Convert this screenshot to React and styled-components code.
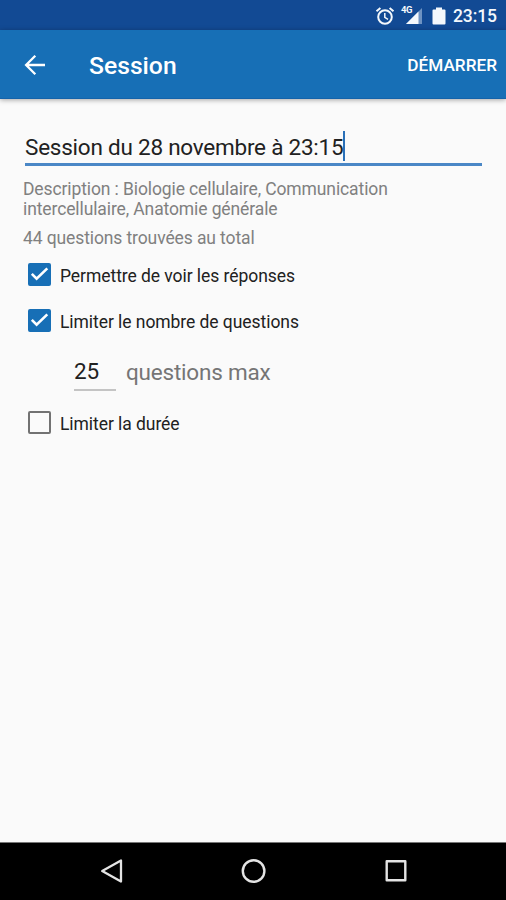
import styled, { createGlobalStyle } from "styled-components";

const GlobalStyle = createGlobalStyle`
  * {
    box-sizing: border-box;
  }
  body {
    margin: 0;
    background-color: #fafafa;
    font-family: Roboto, sans-serif;
    color: #212121;
  }
`;

const SScreen = styled.div`
  display: flex;
  flex-direction: column;
  width: 506px;
  height: 900px;
  overflow: hidden;
  white-space: nowrap;
`;

const SStatusBar = styled.div`
  display: flex;
  align-items: center;
  justify-content: flex-end;
  height: 30px;
  padding: 1px 9px 0 0;
  background-color: #124a94;
  color: #f4f8fc;
  svg {
    display: block;
  }
`;

const SClock = styled.span`
  width: 44px;
  margin-left: 7px;
  font-size: 17.5px;
  font-weight: 500;
  letter-spacing: -0.1px;
`;

const SAppBar = styled.header`
  display: flex;
  align-items: center;
  height: 69px;
  flex-shrink: 0;
  padding: 1px 9px 0 24px;
  background-color: #176fb6;
  color: #fff;
  border-bottom: 1px solid #1463aa;
  box-shadow: 0 1px 5px rgba(0, 0, 0, 0.35);
  svg {
    display: block;
  }
`;

const STitle = styled.h1`
  flex: 1;
  margin: 0 0 0 43px;
  padding-top: 2px;
  font-size: 24.7px;
  font-weight: 500;
`;

const SAction = styled.button`
  padding: 0;
  border: 0;
  background: none;
  color: #fff;
  font: 500 17.2px Roboto, sans-serif;
`;

const SForm = styled.main`
  display: flex;
  flex-direction: column;
  flex: 1;
  padding: 31px 24px 0 23px;
`;

const SNameField = styled.div`
  display: flex;
  align-items: center;
  height: 36px;
  margin-left: 2px;
  border-bottom: 3px solid #4a87c6;
  font-size: 22.5px;
  letter-spacing: -0.23px;
`;

const SCaret = styled.span`
  width: 2px;
  height: 30px;
  margin-top: -2px;
  background-color: #2a70b8;
`;

const SDescription = styled.p`
  width: 400px;
  margin: ${(props) => props.$top}px 0 0;
  color: #808080;
  font-size: 17.5px;
  letter-spacing: -0.11px;
  line-height: 20px;
  white-space: normal;
`;

const SOptions = styled.div`
  padding-top: 3px;
`;

const SOption = styled.label`
  display: flex;
  align-items: center;
  gap: 9px;
  height: 46px;
  padding-left: 5px;
  font-size: 17.5px;
  letter-spacing: -0.06px;
`;

const SOptionText = styled.span`
  padding-top: 3px;
`;

const SCheckbox = styled.span`
  display: flex;
  width: 23px;
  height: 23px;
  border-radius: 2px;
  border: 2px solid ${(props) => (props.$checked ? "#176fb6" : "#727272")};
  background-color: ${(props) => (props.$checked ? "#176fb6" : "transparent")};
`;

const SLimitRow = styled.div`
  display: flex;
  align-items: center;
  height: 56px;
  padding: 1px 0 0 51px;
  gap: 10px;
  font-size: 22.5px;
  letter-spacing: -0.2px;
  color: #757575;
`;

const SNumberField = styled.span`
  width: 42px;
  height: 36px;
  margin-top: 2px;
  line-height: 33px;
  border-bottom: 2px solid #c4c4c4;
  color: #212121;
`;

const SNavBar = styled.nav`
  display: flex;
  align-items: center;
  justify-content: space-between;
  height: 58px;
  padding: 0 97px 2px 99px;
  border-top: 1px solid #777;
  background-color: #000;
`;

const AlarmIcon = () => (
  <svg width="20" height="20" viewBox="0 0 20 20" fill="none" stroke="currentColor">
    <circle cx="10" cy="11" r="6.8" strokeWidth="2" />
    <path d="M1.5 5.2 5.4 2M18.5 5.2 14.6 2" strokeWidth="2" />
    <path d="M9.8 7v4.4l3.2 2" strokeWidth="1.5" />
  </svg>
);

const SSignal = styled.div`
  position: relative;
  margin: 0 10px 0 7px;
  span {
    position: absolute;
    left: -1px;
    top: -2px;
    font-size: 9.5px;
    line-height: 10px;
    font-weight: 700;
    letter-spacing: -0.4px;
  }
`;

const Signal = () => (
  <SSignal>
    <svg width="20" height="18" viewBox="0 0 20 18">
      <path d="M20 1v16H4z" fill="#6e93c2" />
      <path d="M16.5 4.5V17H4z" fill="currentColor" />
    </svg>
    <span>4G</span>
  </SSignal>
);

const BatteryIcon = () => (
  <svg width="14" height="18" viewBox="0 0 14 18" fill="currentColor">
    <path d="M4 0.5h6v2h2.5q1 0 1 1v13q0 1-1 1h-11q-1 0-1-1v-13q0-1 1-1H4z" />
  </svg>
);

const BackArrow = () => (
  <svg width="22" height="22" viewBox="0 0 22 22" fill="none" stroke="currentColor" strokeWidth="2.3">
    <path d="M21 11H3M11.3 1.8 2.1 11l9.2 9.2" />
  </svg>
);

const Option = ({ checked, children }) => (
  <SOption>
    <SCheckbox $checked={checked}>
      {checked && (
        <svg width="19" height="19" viewBox="0 0 19 19" fill="none" stroke="#fff" strokeWidth="2.6">
          <path d="m1.8 8.9 4.8 4.8L17.3 3.4" />
        </svg>
      )}
    </SCheckbox>
    <SOptionText>{children}</SOptionText>
  </SOption>
);

const App = () => {
  return (
    <SScreen>
      <GlobalStyle />
      <SStatusBar>
        <AlarmIcon />
        <Signal />
        <BatteryIcon />
        <SClock>23:15</SClock>
      </SStatusBar>
      <SAppBar>
        <BackArrow />
        <STitle>Session</STitle>
        <SAction>DÉMARRER</SAction>
      </SAppBar>
      <SForm>
        <SNameField>
          Session du 28 novembre à 23:15
          <SCaret />
        </SNameField>
        <SDescription $top={13}>
          Description : Biologie cellulaire, Communication intercellulaire,
          Anatomie générale
        </SDescription>
        <SDescription $top={9}>44 questions trouvées au total</SDescription>
        <SOptions>
          <Option checked>Permettre de voir les réponses</Option>
          <Option checked>Limiter le nombre de questions</Option>
          <SLimitRow>
            <SNumberField>25</SNumberField>
            questions max
          </SLimitRow>
          <Option>Limiter la durée</Option>
        </SOptions>
      </SForm>
      <SNavBar>
        <svg width="26" height="26" viewBox="0 0 26 26" fill="none" stroke="#e4e4e4" strokeWidth="2.3" strokeLinejoin="round">
          <path d="M22 2.5v21L3.2 13z" />
        </svg>
        <svg width="26" height="26" viewBox="0 0 26 26" fill="none" stroke="#e4e4e4" strokeWidth="2.4">
          <circle cx="12.6" cy="13" r="10.8" />
        </svg>
        <svg width="26" height="26" viewBox="0 0 26 26" fill="none" stroke="#e4e4e4" strokeWidth="2.4" strokeLinejoin="round">
          <path d="M3.7 3.2h18.6v19H3.7z" />
        </svg>
      </SNavBar>
    </SScreen>
  );
};

export default App;
